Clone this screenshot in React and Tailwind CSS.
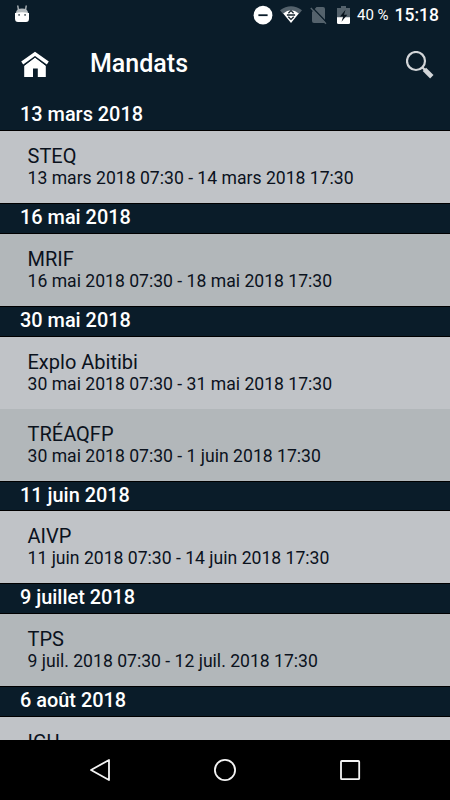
import React from 'react';

const sections = [
  {
    date: '13 mars 2018',
    items: [{ name: 'STEQ', range: '13 mars 2018 07:30 - 14 mars 2018 17:30' }],
  },
  {
    date: '16 mai 2018',
    items: [{ name: 'MRIF', range: '16 mai 2018 07:30 - 18 mai 2018 17:30', alt: true }],
  },
  {
    date: '30 mai 2018',
    items: [
      { name: 'Explo Abitibi', range: '30 mai 2018 07:30 - 31 mai 2018 17:30' },
      { name: 'TRÉAQFP', range: '30 mai 2018 07:30 - 1 juin 2018 17:30', alt: true },
    ],
  },
  {
    date: '11 juin 2018',
    items: [{ name: 'AIVP', range: '11 juin 2018 07:30 - 14 juin 2018 17:30' }],
  },
  {
    date: '9 juillet 2018',
    items: [{ name: 'TPS', range: '9 juil. 2018 07:30 - 12 juil. 2018 17:30', alt: true }],
  },
  {
    date: '6 août 2018',
    items: [{ name: 'IGU' }],
  },
];

function StatusBar() {
  return (
    <div className="flex h-[30px] items-center pl-[14px] pr-[11px] text-white">
      <svg className="h-[20px] w-4" viewBox="0 0 16 20">
        <path d="M4.4 5.5 3.8 0.5M11.6 5.5 12.2 0.5" stroke="#dfe2e4" strokeWidth="1.1" />
        <path d="M2 8Q2 3.4 8 3.4T14 8Z" fill="#b3babe" />
        <path d="M1 8Q8 6.4 15 8V13.5Q15 17 12 17H4Q1 17 1 13.5Z" fill="#fff" />
        <rect x="4.2" y="9" width="1.8" height="1.8" fill="#6c757b" />
        <rect x="10.2" y="9" width="1.8" height="1.8" fill="#6c757b" />
      </svg>
      <div className="ml-auto flex items-center">
        <svg className="h-5 w-5" viewBox="0 0 20 20">
          <circle cx="10" cy="10.2" r="9.4" fill="#fff" />
          <path d="M5.4 10.2h9.2" stroke="#0a1c29" strokeWidth="1.8" />
        </svg>
        <svg className="ml-[7px] h-5 w-[22px]" viewBox="0 0 22 20">
          <path d="M0 5.3Q11-2.7 22 5.3L18.7 9.2Q11 3.6 3.3 9.2Z" fill="#54626c" />
          <path d="M3.2 8.6Q11 2 18.8 8.6L11 18Z" fill="#fff" />
          <path d="M8.4 8.3 11 5.6l2.6 2.7M6.9 10h8.2M8.3 11.8 11 14.4l2.7-2.6" stroke="#17242e" strokeWidth="1.3" fill="none" />
        </svg>
        <svg className="ml-[8px] h-5 w-[17px]" viewBox="0 0 17 20">
          <path d="M6.5 2H13Q15 2 15 4V18H4Q2 18 2 16V7Z" fill="#54626c" />
          <path d="M2 2.2 17 17.8" stroke="#0a1c29" strokeWidth="1.5" />
          <path d="M.8 3 16 18.8" stroke="#54626c" strokeWidth="1.4" />
        </svg>
        <svg className="ml-[10px] h-5 w-[13px]" viewBox="0 0 13 20">
          <path d="M4 1h5v2h4v15.2H0V3h4Z" fill="#54626c" />
          <path d="M0 12.2h13v5.3q0 1.5-1.5 1.5h-10Q0 19 0 17.5Z" fill="#fff" />
          <path d="M8.5 4.7 3 11.5h3.2L4.5 16.8 10.3 9.8H7Z" fill="#07131d" />
        </svg>
        <span className="ml-[7px] w-[40px] whitespace-nowrap text-[15px] leading-5">40 %</span>
        <span className="-mt-px flex w-[42px] justify-end whitespace-nowrap text-[17.5px] font-medium leading-5">15:18</span>
      </div>
    </div>
  );
}

function AppBar() {
  return (
    <header className="flex h-[70.3px] items-center pl-[21px] pr-[16px]">
      <svg className="h-7 w-7" viewBox="0 0 28 28">
        <path d="M3.2 14.8 14 6.6l10.8 8.2V26h-8v-8.6h-4.8V26H3.2Z" fill="#fff" />
        <path d="M1.8 13 14 3.8 26.2 13" fill="none" stroke="#0a1c29" strokeWidth="4.2" />
        <path d="M1.2 12 14 2.8 26.8 12" fill="none" stroke="#fff" strokeWidth="3.4" />
      </svg>
      <h1 className="-mt-[2px] ml-[41px] text-[25px] font-medium leading-8 text-white">Mandats</h1>
      <svg className="ml-auto h-7 w-7" viewBox="0 0 28 28">
        <circle cx="10" cy="10" r="9" fill="none" stroke="#d3d5d8" strokeWidth="2.2" />
        <path d="m16.2 16.2 3 3" stroke="#d3d5d8" strokeWidth="2.2" />
        <path d="m18.4 18.4 7.4 7.4" stroke="#d3d5d8" strokeWidth="4.8" />
      </svg>
    </header>
  );
}

function Section({ section, first }) {
  return (
    <section>
      <h2
        className={`flex h-[30.9px] items-center border-b border-black pb-px pl-[20px] text-[19.9px] font-medium text-white ${
          first ? '' : 'border-t'
        }`}
      >
        {section.date}
      </h2>
      {section.items.map((item) => (
        <div
          key={item.name}
          className={`h-[71.9px] pl-[27.5px] pt-[13px] text-[#0b121d] ${item.alt ? 'bg-[#b2b7ba]' : 'bg-[#c0c3c7]'}`}
        >
          <p className="text-[20px] leading-6">{item.name}</p>
          {item.range && <p className="whitespace-nowrap text-[17.6px] leading-5">{item.range}</p>}
        </div>
      ))}
    </section>
  );
}

function NavBar() {
  return (
    <nav className="flex h-[60px] shrink-0 items-center justify-between bg-black pl-[88px] pr-[88px]">
      <svg className="h-6 w-6" viewBox="0 0 24 24" fill="none" stroke="#f4f4f4" strokeWidth="1.8">
        <path d="M21 2v20L3 12Z" strokeLinejoin="round" />
      </svg>
      <svg className="h-6 w-6" viewBox="0 0 24 24" fill="none" stroke="#f4f4f4" strokeWidth="1.8">
        <circle cx="12" cy="12" r="10.1" />
      </svg>
      <svg className="h-6 w-6" viewBox="0 0 24 24" fill="none" stroke="#f4f4f4" strokeWidth="1.8">
        <rect x="3" y="3" width="18.2" height="18.2" rx="0.8" />
      </svg>
    </nav>
  );
}

export default function App() {
  return (
    <div className="flex h-[800px] w-[450px] flex-col overflow-hidden bg-[#0a1c29] font-['Roboto',sans-serif]">
      <StatusBar />
      <AppBar />
      <main className="min-h-0 flex-1 overflow-hidden">
        {sections.map((section, idx) => (
          <Section key={section.date} section={section} first={idx === 0} />
        ))}
      </main>
      <NavBar />
    </div>
  );
}
